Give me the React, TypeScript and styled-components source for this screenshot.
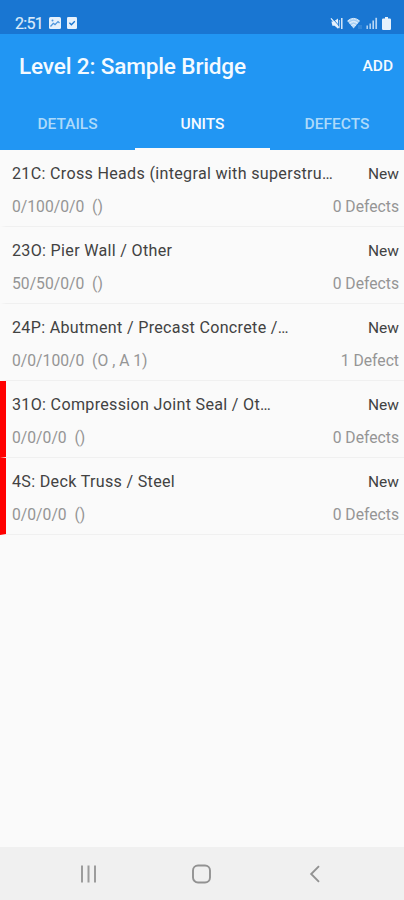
import React from "react";
import styled, { createGlobalStyle } from "styled-components";

const GlobalStyle = createGlobalStyle`
  * { box-sizing: border-box; }
  body { margin: 0; background: #fafafa; font-family: Roboto, "Liberation Sans", sans-serif; }
`;

const Screen = styled.div`
  display: flex;
  flex-direction: column;
  width: 404px;
  height: 900px;
  overflow: hidden;
  background: #fafafa;
`;

const StatusBar = styled.div`
  display: flex;
  flex: none;
  align-items: flex-end;
  justify-content: space-between;
  height: 34px;
  padding: 0 13px 2px 15px;
  background: #1976d2;
`;

const StatusGroup = styled.div<{ $gap: number }>`
  display: flex;
  align-items: center;
  height: 18px;
  gap: ${(p) => p.$gap}px;
  color: #e6f1fc;
  svg { display: block; }
`;

const Clock = styled.span`
  width: 28px;
  padding-top: 1px;
  font-size: 16px;
  letter-spacing: -0.7px;
  line-height: 18px;
  color: #dcebfa;
  -webkit-text-stroke: 0.2px #dcebfa;
`;

const AppBar = styled.header`
  display: flex;
  flex: none;
  align-items: center;
  justify-content: space-between;
  height: 64px;
  padding: 0 11px 0 19px;
  background: #2196f3;
  color: #f4faff;
`;

const Title = styled.h1`
  margin: 0;
  padding-top: 1px;
  font-size: 22.6px;
  font-weight: 500;
  letter-spacing: -0.16px;
  line-height: 30px;
  white-space: nowrap;
`;

const AddButton = styled.button`
  padding: 0;
  border: 0;
  background: none;
  color: inherit;
  font: 500 15.5px/20px Roboto, sans-serif;
`;

const Tabs = styled.nav`
  display: grid;
  flex: none;
  grid-template-columns: 135px 135px 134px;
  height: 52px;
  background: #2196f3;
`;

const Tab = styled.button<{ $active?: boolean }>`
  padding: 2px 0 0;
  border: 0;
  border-bottom: 2px solid ${(p) => (p.$active ? "#fafafa" : "#2196f3")};
  background: none;
  color: ${(p) => (p.$active ? "#f4faff" : "#addafa")};
  font: 500 15.5px/20px Roboto, sans-serif;
`;

const List = styled.main`
  flex: 1;
`;

const Row = styled.article<{ $flagged?: boolean }>`
  display: flex;
  flex-direction: column;
  height: 77px;
  padding: 14px 5px 0 6px;
  border-bottom: 1px solid #f0f0f0;
  border-left: 6px solid ${(p) => (p.$flagged ? "#ff0000" : "#fafafa")};
`;

const Line = styled.div<{ $muted?: boolean }>`
  display: flex;
  justify-content: space-between;
  height: ${(p) => (p.$muted ? 20 : 33)}px;
  line-height: 20px;
  font-size: ${(p) => (p.$muted ? 15.7 : 16.1)}px;
  color: ${(p) => (p.$muted ? "#959595" : "#424242")};
  white-space: pre;
`;

const Name = styled.span`
  letter-spacing: 0.31px;
`;

const State = styled.span`
  font-size: 15.5px;
`;

const NavBar = styled.footer`
  display: flex;
  flex: none;
  align-items: flex-start;
  justify-content: space-between;
  height: 53px;
  padding: 15px 77px 0 76px;
  background: #f0f0f0;
  color: #929292;
  svg { display: block; }
`;

type Unit = { name: string; condition: string; defects: string; flagged?: boolean };

const units: Unit[] = [
  { name: "21C: Cross Heads (integral with superstru…", condition: "0/100/0/0  ()", defects: "0 Defects" },
  { name: "23O: Pier Wall / Other", condition: "50/50/0/0  ()", defects: "0 Defects" },
  { name: "24P: Abutment / Precast Concrete /…", condition: "0/0/100/0  (O , A 1)", defects: "1 Defect" },
  { name: "31O: Compression Joint Seal / Ot…", condition: "0/0/0/0  ()", defects: "0 Defects", flagged: true },
  { name: "4S: Deck Truss / Steel", condition: "0/0/0/0  ()", defects: "0 Defects", flagged: true },
];

const PictureIcon = () => (
  <svg width="12" height="12" viewBox="0 0 12 12">
    <rect width="12" height="12" rx="1.5" fill="currentColor" />
    <path d="M1.5 9.5 4.3 6.3 6 7.6 9 4.6 10.5 6" fill="none" stroke="#4f96dd" strokeWidth="1.3" />
    <circle cx="3.5" cy="3.4" r="1" fill="#4f96dd" />
  </svg>
);

const CheckIcon = () => (
  <svg width="10" height="12" viewBox="0 0 10 12">
    <rect width="10" height="12" rx="1.3" fill="currentColor" />
    <path d="M2.4 5.7 4.4 7.7 7.8 4.2" fill="none" stroke="#1976d2" strokeWidth="1.3" />
  </svg>
);

const MuteIcon = () => (
  <svg width="13" height="13" viewBox="0 0 13 13">
    <path d="M1.4 4.6h2.4L8 1.4v10.4L4.6 8.7H2.4z" fill="currentColor" />
    <path d="M1 1.4 9.4 11.2" stroke="currentColor" strokeWidth="1.3" />
    <path d="M2.5 1.2 9.8 9.7" stroke="#1976d2" strokeWidth=".9" />
    <path d="M9.4 3v7" stroke="#a9cdf0" strokeWidth="1.1" />
    <path d="M11.8 1v11" stroke="currentColor" strokeWidth="1.4" />
  </svg>
);

const WifiIcon = () => (
  <svg width="15" height="13" viewBox="0 0 15 13">
    <path d="M.5 4Q6.5-1.2 12.7 4L6.6 11.5z" fill="#bddcf8" />
    <path d="M.5 4Q6.5-1.2 12.7 4M2.5 6.3Q6.6 2.8 10.7 6.3M4.4 8.5Q6.6 6.5 8.8 8.5" fill="none" stroke="#e6f1fc" strokeWidth="1" />
    <path d="M1.7 5.2Q6.6 1 11.5 5.2M3.6 7.5Q6.6 4.8 9.7 7.5" fill="none" stroke="#8fbfec" strokeWidth=".6" />
    <path d="M12 8v4M14 8v4" stroke="#4f96dd" strokeWidth="1" />
  </svg>
);

const SignalIcon = () => (
  <svg width="12" height="12" viewBox="0 0 12 12">
    <path d="M1.2 12V8.5M4.2 12V6.5" stroke="#b5d5f5" strokeWidth="1.5" />
    <path d="M7.2 12V3.5" stroke="#c5def7" strokeWidth="1.5" />
    <path d="M10.2 12V.8" stroke="#b5d5f5" strokeWidth="1.7" />
  </svg>
);

const BatteryIcon = () => (
  <svg width="9" height="13" viewBox="0 0 9 13">
    <path d="M3 0h3v1.5h1.8q1.2 0 1.2 1.2v9q0 1.3-1.2 1.3H1.2Q0 13 0 11.7v-9q0-1.2 1.2-1.2H3z" fill="currentColor" />
  </svg>
);

const RecentsIcon = () => (
  <svg width="24" height="24" viewBox="0 0 24 24" fill="none" stroke="currentColor" strokeWidth="2">
    <path d="M6 3.5v17M12.5 3.5v17M19 3.5v17" opacity=".9" />
  </svg>
);

const HomeIcon = () => (
  <svg width="24" height="24" viewBox="0 0 24 24" fill="none" stroke="currentColor" strokeWidth="1.9">
    <rect x="3" y="3.5" width="17" height="17" rx="5" />
  </svg>
);

const BackIcon = () => (
  <svg width="24" height="24" viewBox="0 0 24 24" fill="none" stroke="currentColor" strokeWidth="1.9">
    <path d="m16 4.2-7.8 7.8 7.8 7.8" />
  </svg>
);

export default function App() {
  return (
    <Screen>
      <GlobalStyle />
      <StatusBar>
        <StatusGroup $gap={6}>
          <Clock>2:51</Clock>
          <PictureIcon />
          <CheckIcon />
        </StatusGroup>
        <StatusGroup $gap={4}>
          <MuteIcon />
          <WifiIcon />
          <SignalIcon />
          <BatteryIcon />
        </StatusGroup>
      </StatusBar>
      <AppBar>
        <Title>Level 2: Sample Bridge</Title>
        <AddButton>ADD</AddButton>
      </AppBar>
      <Tabs>
        <Tab>DETAILS</Tab>
        <Tab $active>UNITS</Tab>
        <Tab>DEFECTS</Tab>
      </Tabs>
      <List>
        {units.map((unit) => (
          <Row key={unit.name} $flagged={unit.flagged}>
            <Line>
              <Name>{unit.name}</Name>
              <State>New</State>
            </Line>
            <Line $muted>
              <span>{unit.condition}</span>
              <span>{unit.defects}</span>
            </Line>
          </Row>
        ))}
      </List>
      <NavBar>
        <RecentsIcon />
        <HomeIcon />
        <BackIcon />
      </NavBar>
    </Screen>
  );
}
